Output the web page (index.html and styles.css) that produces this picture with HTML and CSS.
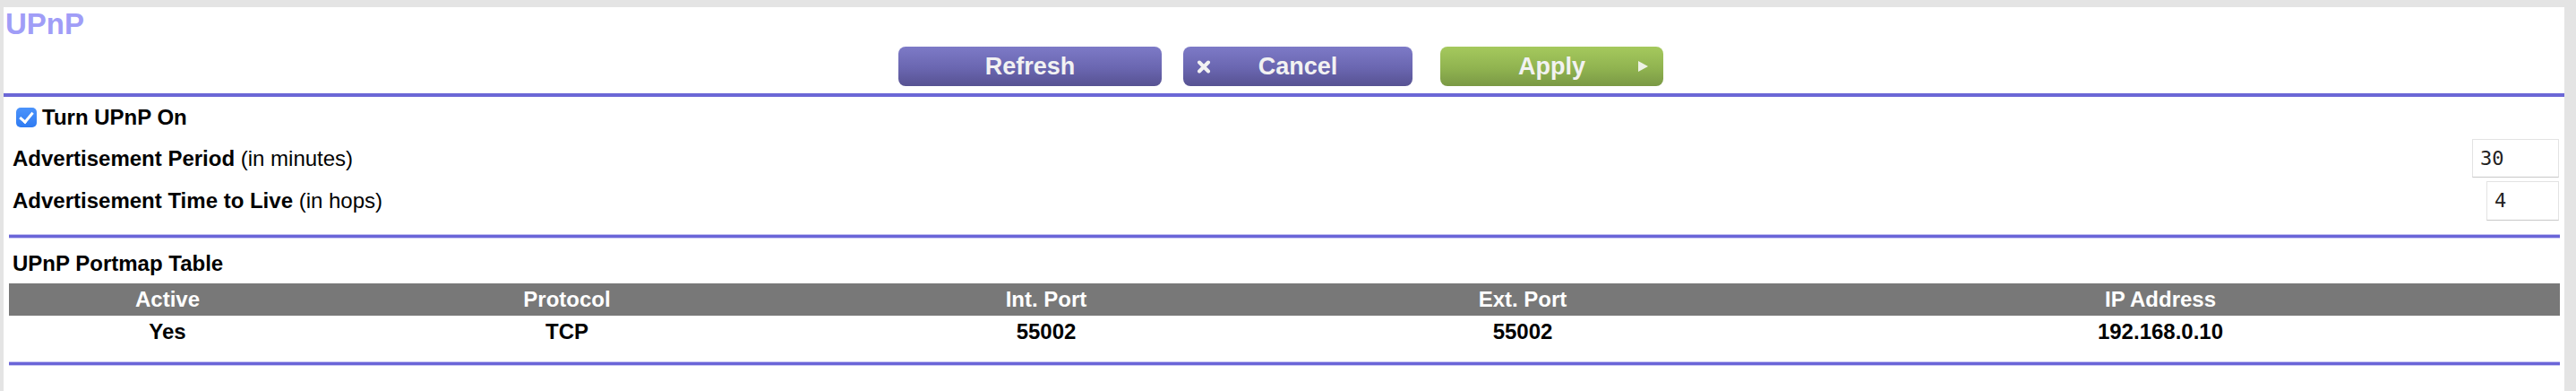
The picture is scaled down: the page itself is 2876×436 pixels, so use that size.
FILE: index.html
```html
<!DOCTYPE html>
<html lang="en">

<head>
  <meta charset="UTF-8">
  <meta name="viewport" content="width=device-width, initial-scale=1.0">
  <title>UPnP</title>
  <link rel="stylesheet" href="styles.css">
</head>

<body>
  <div class="page">
    <h1 class="title">UPnP</h1>

    <div class="buttons">
      <button class="btn btn-purple btn-refresh"><span></span><span>Refresh</span><span></span></button>
      <button class="btn btn-purple btn-cancel">
        <svg class="btn-x" width="16" height="15" viewBox="0 0 16 15">
          <path d="M3 2.5 L13 12.5 M13 2.5 L3 12.5" stroke="#f2f2f2" stroke-width="4" stroke-linecap="round" />
        </svg>
        <span>Cancel</span><span></span>
      </button>
      <button class="btn btn-green btn-apply"><span></span><span>Apply</span><span class="btn-arrow"></span></button>
    </div>

    <div class="rule"></div>

    <div class="settings">
      <div class="row row-check">
        <label class="check">
          <input type="checkbox" checked>
          <b>Turn UPnP On</b>
        </label>
      </div>
      <div class="row row-period">
        <span><b>Advertisement Period</b> (in minutes)</span>
        <input class="num num-wide" type="text" value="30">
      </div>
      <div class="row row-ttl">
        <span><b>Advertisement Time to Live</b> (in hops)</span>
        <input class="num num-short" type="text" value="4">
      </div>
    </div>

    <div class="rule rule-soft"></div>

    <div class="section-title">UPnP Portmap Table</div>
    <table class="portmap">
      <colgroup>
        <col style="width: 354px">
        <col style="width: 538px">
        <col style="width: 532px">
        <col style="width: 532px">
        <col style="width: 892px">
      </colgroup>
      <thead>
        <tr>
          <th>Active</th>
          <th>Protocol</th>
          <th>Int. Port</th>
          <th>Ext. Port</th>
          <th>IP Address</th>
        </tr>
      </thead>
      <tbody>
        <tr>
          <td>Yes</td>
          <td>TCP</td>
          <td>55002</td>
          <td>55002</td>
          <td>192.168.0.10</td>
        </tr>
      </tbody>
    </table>

    <div class="rule rule-soft rule-bottom"></div>
  </div>
</body>

</html>
```

FILE: styles.css
```css
/* gray frame round the white page */
body {
  margin: 0;
  padding: 8px 13px 0 4px;
  background-color: #e4e4e4;
  font-family: "Liberation Sans", Arial, Helvetica, sans-serif;
  font-size: 24px;
  color: #000;
}

.page {
  height: 428px;
  background-color: #fff;
}

.title {
  margin: 0;
  height: 44px;
  padding-left: 2px;
  font-size: 33px;
  line-height: 38px;
  font-weight: bold;
  color: #a09df7;
}

/* button bar */
.buttons {
  display: flex;
  justify-content: center;
  height: 44px;
  padding-right: 7px;
  margin-bottom: 8px;
}

.btn {
  display: grid;
  grid-template-columns: 1fr auto 1fr;
  align-items: center;
  height: 44px;
  padding: 0;
  border: none;
  border-radius: 8px;
  font-family: inherit;
  font-size: 27px;
  font-weight: bold;
  color: #f2f2f2;
  cursor: pointer;
}

.btn-purple {
  background: linear-gradient(#7d7ac7, #6a66b0 55%, #575292);
}

.btn-green {
  background: linear-gradient(#a5c95d, #90b350 55%, #7a9945);
}

.btn-refresh {
  width: 294px;
}

.btn-cancel {
  width: 256px;
  margin-left: 24px;
}

.btn-apply {
  width: 249px;
  margin-left: 31px;
}

.btn-x {
  justify-self: start;
  margin-left: 15px;
}

.btn-arrow {
  justify-self: end;
  margin-right: 17px;
  width: 0;
  height: 0;
  border-top: 6px solid transparent;
  border-bottom: 6px solid transparent;
  border-left: 11px solid #eef2e6;
}

/* purple separators */
.rule {
  height: 4px;
  background-color: #6b67d6;
}

.rule-soft {
  height: 5px;
  margin: 13px 5px 0 6px;
  background: linear-gradient(#c4c2f1 0, #c4c2f1 1px, #6a65d8 1px, #6a65d8 4px, #cbc9f2 4px);
}

.rule-bottom {
  margin-top: 15px;
}

/* settings rows */
.settings {
  padding: 0 6px 0 10px;
}

.row {
  display: flex;
  align-items: center;
  justify-content: space-between;
}

.row-check {
  height: 46px;
}

.row-period {
  height: 45px;
}

.row-ttl {
  height: 49px;
}

.check {
  display: flex;
  align-items: center;
  gap: 6px;
}

.check input {
  appearance: none;
  position: relative;
  width: 23px;
  height: 22px;
  margin: 0 0 0 4px;
  border-radius: 5px;
  background: linear-gradient(#4b93fb, #2f7bf2);
}

.check input:checked::after {
  content: "";
  position: absolute;
  left: 7px;
  top: 2px;
  width: 6px;
  height: 12px;
  border-right: 3px solid #fff;
  border-bottom: 3px solid #fff;
  transform: rotate(40deg);
}

.num {
  box-sizing: border-box;
  padding: 0 0 0 8px;
  border: 1px solid #e3e3e3;
  border-bottom-color: #c8c8c8;
  font-family: "DejaVu Sans Mono", monospace;
  font-size: 22px;
  color: #222;
  outline: none;
}

.num-wide {
  width: 97px;
  height: 43px;
}

.num-short {
  width: 81px;
  height: 44px;
}

/* portmap table */
.section-title {
  box-sizing: border-box;
  display: flex;
  align-items: center;
  height: 50px;
  padding: 6px 0 0 10px;
  font-weight: bold;
}

.portmap {
  width: 2848px;
  margin: 0 5px 0 6px;
  border-collapse: collapse;
  table-layout: fixed;
}

.portmap th {
  height: 36px;
  padding: 0;
  background-color: #787878;
  color: #fff;
  font-weight: bold;
  text-align: center;
}

.portmap td {
  height: 36px;
  padding: 0;
  font-weight: bold;
  text-align: center;
}
```
